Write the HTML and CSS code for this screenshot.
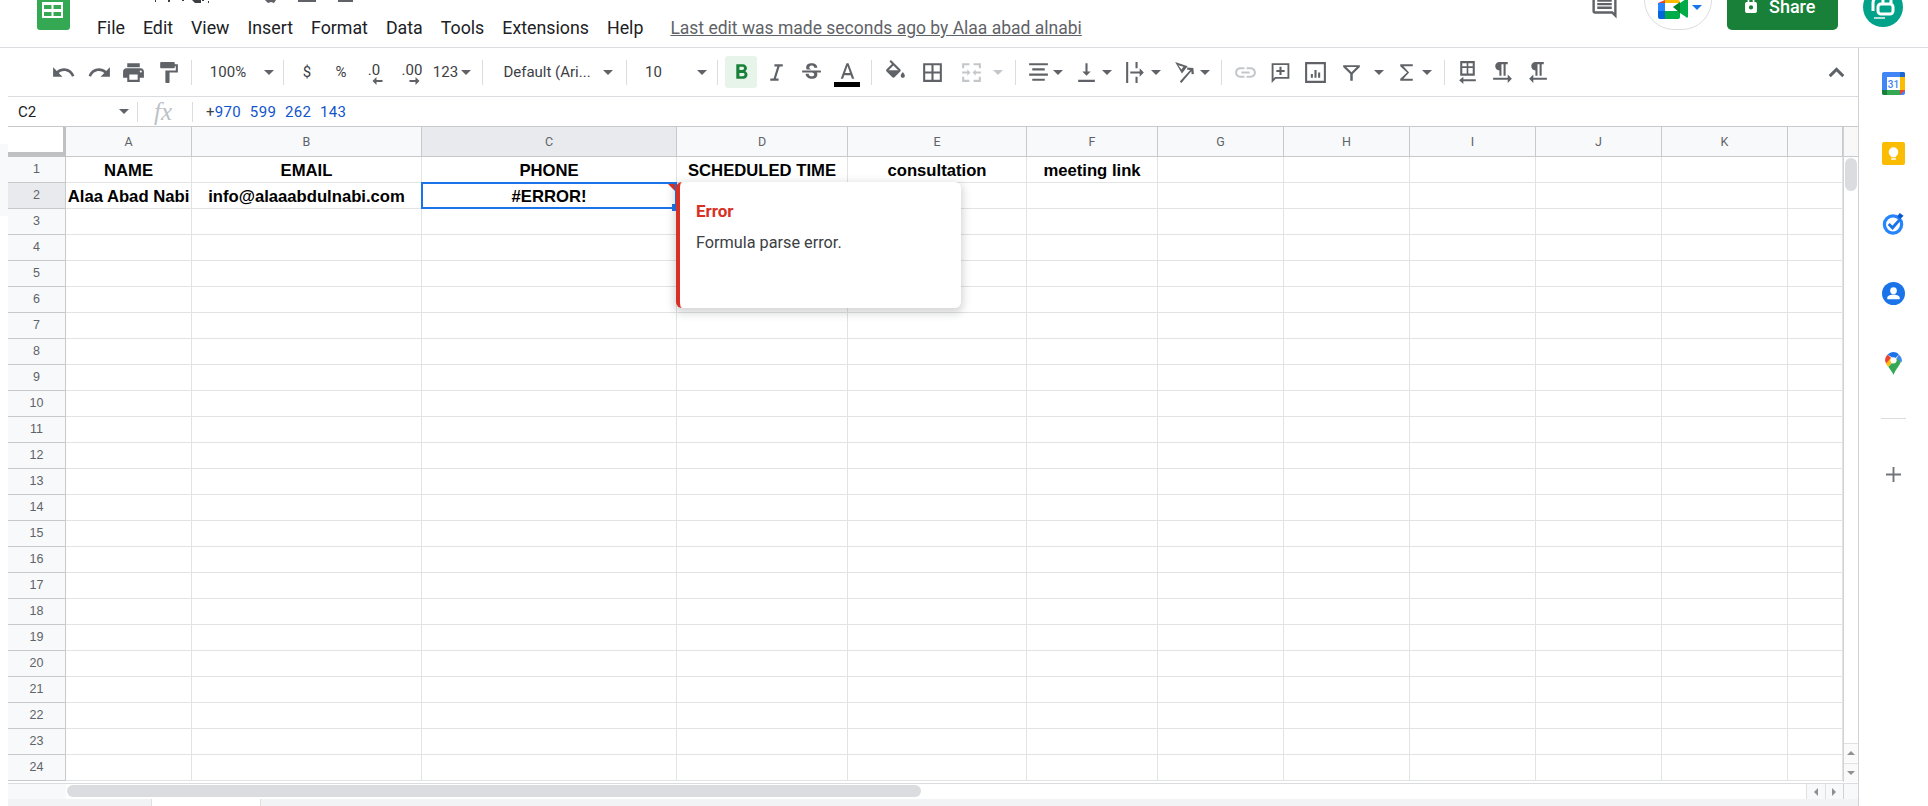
FILE: index.html
```html
<!DOCTYPE html>
<html lang="en">
<head>
<meta charset="utf-8">
<title>Sheet</title>
<link rel="stylesheet" href="styles.css">
</head>
<body>
<div class="gutter-mark"></div>
<header class="topbar">
  <svg class="logo" viewBox="0 0 33 40"><rect width="33" height="40" rx="3" fill="#34a853"/><path fill="#fff" d="M5 12h21v16H5z"/><path fill="#34a853" d="M7 15h7.500v4H7zM16.500 15H24v4h-7.500zM7 22h7.500v4H7zM16.500 22H24v4h-7.500z"/></svg>
  <svg class="title-bits" viewBox="0 0 210 3"><path fill="#3c4043" d="M1 0h1v2H1zM14 0h2v2h-2zM28 0h2v1h-2zM38 0h9v3h-6zM48 0h2v1h-2zM54 1h1v2h-1z"/><path fill="#5f6368" d="M111 0h11l-2 3-3-1-3 1zM144 0h18v2h-18zM184 0h15v2h-15z"/></svg>
  <nav class="menu"><span>File</span><span>Edit</span><span>View</span><span>Insert</span><span>Format</span><span>Data</span><span>Tools</span><span>Extensions</span><span>Help</span></nav>
  <a class="last-edit">Last edit was made seconds ago by Alaa abad alnabi</a>
  <svg class="comments" viewBox="0 0 24 24"><path fill="#5f6368" d="M21.990 4c0-1.100-.89-2-1.990-2H4c-1.100 0-2 .9-2 2v12c0 1.100.9 2 2 2h14l4 4-.01-18zM20 4v13.170L18.830 16H4V4h16zM6 12h12v2H6zm0-3h12v2H6zm0-3h12v2H6z"/></svg>
  <div class="meet">
    <svg class="meet-icon" viewBox="0 0 30 19"><path fill="#ea4335" d="M7 0v3H0z"/><path fill="#2684fc" d="M0 3h7v8H0z"/><path fill="#0066da" d="M0 11h7v8H2a2 2 0 0 1-2-2z"/><path fill="#ffba00" d="M7 0h13a2 2 0 0 1 2 2v1H7z"/><path fill="#00ac47" d="M7 11h15v6a2 2 0 0 1-2 2H7z"/><path fill="#00832d" d="M15 7l7-5v11z"/><path fill="#00ac47" d="M22 3l6-4a1 1 0 0 1 2 1v16a1 1 0 0 1-2 1l-6-4z"/></svg>
    <span class="caret blue"></span>
  </div>
  <div class="share"><svg class="lock" viewBox="0 0 14 20"><path fill="#fff" d="M12 7h-1V4.500a4 4 0 0 0-8 0V7H2a2 2 0 0 0-2 2v9a2 2 0 0 0 2 2h10a2 2 0 0 0 2-2V9a2 2 0 0 0-2-2zM5 4.500a2 2 0 0 1 4 0V7H5zM7 16a2.500 2.500 0 1 1 0-5 2.500 2.500 0 0 1 0 5z"/></svg><span>Share</span></div>
  <div class="avatar"><svg viewBox="0 0 40 40"><g fill="none" stroke="#fff" stroke-width="3"><path d="M10 24v-8a7 7 0 0 1 7-7h5"/><rect x="15" y="17" width="15" height="10" rx="3"/><path d="M20 16v-5a4 4 0 0 1 8 0v5"/></g><path fill="#b8e0d8" d="M11 30h11v2H11z"/></svg></div>
</header>
<div class="main">
  <div class="workspace">
    <div class="toolbar">
      <svg class="ic" viewBox="0 0 24 24"><path d="M12.500 8c-2.650 0-5.050.99-6.900 2.600L2 7v9h9l-3.620-3.620c1.390-1.160 3.160-1.880 5.120-1.880 3.540 0 6.550 2.310 7.600 5.500l2.370-.78C21.080 11.030 17.150 8 12.500 8z"/></svg>
      <svg class="ic" viewBox="0 0 24 24"><path d="M18.400 10.600C16.550 8.990 14.150 8 11.500 8c-4.650 0-8.580 3.030-9.960 7.220L3.900 16c1.050-3.190 4.050-5.500 7.600-5.500 1.950 0 3.730.72 5.120 1.880L13 16h9V7l-3.600 3.600z"/></svg>
      <svg class="ic" viewBox="0 0 24 24"><path d="M19 8H5c-1.660 0-3 1.340-3 3v6h4v4h12v-4h4v-6c0-1.660-1.340-3-3-3zm-3 11H8v-5h8v5zm3-7c-.55 0-1-.45-1-1s.45-1 1-1 1 .45 1 1-.45 1-1 1zm-1-9H6v4h12V3z"/></svg>
      <svg class="ic" viewBox="0 0 24 24"><path d="M18 4V3c0-.55-.45-1-1-1H5c-.55 0-1 .45-1 1v4c0 .55.45 1 1 1h12c.55 0 1-.45 1-1V6h1v4H9v11c0 .55.45 1 1 1h2c.55 0 1-.45 1-1v-9h8V4h-3z"/></svg>
      <span class="sep"></span>
      <span class="tx">100%</span><span class="caret"></span>
      <span class="sep"></span>
      <span class="tx">$</span><span class="tx">%</span>
      <span class="dec"><span>.0</span><svg viewBox="0 0 10 8"><path d="M4 0v3h6v2H4v3L0 4z"/></svg></span>
      <span class="dec"><span>.00</span><svg viewBox="0 0 10 8"><path d="M6 0v3H0v2h6v3l4-4z"/></svg></span>
      <span class="tx">123</span><span class="caret"></span>
      <span class="sep"></span>
      <span class="tx">Default (Ari...</span><span class="caret"></span>
      <span class="sep"></span>
      <span class="tx size">10</span><span class="caret"></span>
      <span class="sep"></span>
      <span class="bold-btn"><svg class="ic green" viewBox="0 0 24 24"><path d="M15.600 10.790c.97-.67 1.650-1.770 1.650-2.790 0-2.260-1.750-4-4-4H7v14h7.040c2.090 0 3.710-1.700 3.710-3.790 0-1.520-.86-2.820-2.150-3.420zM10 6.500h3c.83 0 1.500.67 1.500 1.500s-.67 1.500-1.500 1.500h-3v-3zm3.500 9H10v-3h3.500c.83 0 1.500.67 1.500 1.500s-.67 1.500-1.500 1.500z"/></svg></span>
      <svg class="ic" viewBox="0 0 24 24"><path d="M10 4v2.300h2.800L9.200 17.700H6V20h8v-2.300h-2.600l3.600-11.400H18V4z"/></svg>
      <svg class="ic" viewBox="0 0 24 24"><path d="M7.240 8.750c-.26-.48-.39-1.030-.39-1.670 0-.61.13-1.160.4-1.670.26-.5.63-.93 1.110-1.290.48-.35 1.050-.63 1.700-.83.66-.19 1.390-.29 2.180-.29.81 0 1.540.11 2.210.34.66.22 1.230.54 1.690.94.47.4.83.88 1.080 1.430.25.55.38 1.150.38 1.810h-3.010c0-.31-.05-.59-.15-.85-.09-.27-.24-.49-.44-.68-.2-.19-.45-.33-.75-.44-.3-.1-.66-.16-1.060-.16-.39 0-.74.04-1.030.13-.29.09-.53.21-.72.36-.19.16-.34.34-.44.55-.1.21-.15.43-.15.66 0 .48.25.88.74 1.210.38.25.77.48 1.410.7H7.390c-.05-.08-.11-.17-.15-.25zM21 12v-2H3v2h9.620c.18.07.4.14.55.2.37.17.66.34.87.51.21.17.35.36.43.57.07.2.11.43.11.69 0 .23-.05.45-.14.66-.09.2-.23.38-.42.53-.19.15-.42.26-.71.35-.29.08-.63.13-1.010.13-.43 0-.83-.04-1.180-.13s-.66-.23-.91-.42c-.25-.19-.45-.44-.59-.75-.14-.31-.25-.76-.25-1.210H6.400c0 .55.08 1.130.24 1.580.16.45.37.85.65 1.210.28.35.6.66.98.92.37.26.78.48 1.220.65.44.17.9.3 1.380.39.48.08.96.13 1.440.13.8 0 1.530-.09 2.180-.28s1.210-.45 1.670-.79c.46-.34.82-.77 1.070-1.270s.38-1.070.38-1.710c0-.6-.1-1.140-.31-1.610-.05-.11-.11-.23-.17-.33H21z"/></svg>
      <span class="color-a"><svg viewBox="0 0 24 18"><path d="M11 1L5.500 16h2.250l1.120-3.500h6.250l1.120 3.500h2.250L13 1h-2zm-1.380 9.500L12 3.670l2.380 6.830H9.620z"/></svg><i></i></span>
      <span class="sep"></span>
      <svg class="ic" viewBox="0 0 24 24"><path d="M16.560 8.940L7.620 0 6.210 1.410l2.380 2.380-5.150 5.150c-.59.59-.59 1.540 0 2.120l5.500 5.500c.29.29.68.44 1.060.44s.77-.15 1.060-.44l5.500-5.500c.59-.58.59-1.530 0-2.120zM5.210 10L10 5.210 14.790 10z"/><path d="M5 10h10l-5 5zM19 11.500s-2 2.170-2 3.500c0 1.100.9 2 2 2s2-.9 2-2c0-1.330-2-3.500-2-3.500z"/></svg>
      <svg class="ic" viewBox="0 0 24 24"><path d="M3 3v18h18V3H3zm8 16H5v-6h6v6zm0-8H5V5h6v6zm8 8h-6v-6h6v6zm0-8h-6V5h6v6z"/></svg>
      <svg class="ic off" viewBox="0 0 24 24"><path d="M3 3h7v2H5v3H3zM14 3h7v5h-2V5h-5zM3 16h2v3h5v2H3zM19 16h2v5h-7v-2h5zM3 11h5V9l3 3-3 3v-2H3zM21 11h-5V9l-3 3 3 3v-2h5z"/></svg>
      <span class="caret light"></span>
      <span class="sep"></span>
      <svg class="ic" viewBox="0 0 24 24"><path d="M3 3h18v2H3zM6 8h12v2H6zM3 13h18v2H3zM6 18h12v2H6z"/></svg>
      <span class="caret"></span>
      <span></span>
      <svg class="ic" viewBox="0 0 24 24"><path d="M16 11h-3V3h-2v8H8l4 4 4-4zM4 19v2h16v-2H4z"/></svg>
      <span class="caret"></span>
      <span></span>
      <svg class="ic" viewBox="0 0 24 24"><path d="M3 2h2v20H3zM12 2h2v6h-2zM12 16h2v6h-2zM7 11h9V8l4 4-4 4v-3H7z"/></svg>
      <span class="caret"></span>
      <span></span>
      <svg class="ic" viewBox="0 0 24 24"><path d="M3 2l12 4-5.500 7zm3 3l3.100 4 1.900-2.500zM7.500 20.600L17.500 9.500l-3-.2.200-2.200 5.800.5.500 5.800-2.200.2-.2-2.800L9 22z"/></svg>
      <span class="caret"></span>
      <span class="sep"></span>
      <svg class="ic off" viewBox="0 0 24 24"><path d="M3.900 12c0-1.710 1.390-3.100 3.100-3.100h4V7H7c-2.760 0-5 2.240-5 5s2.240 5 5 5h4v-1.900H7c-1.710 0-3.100-1.390-3.100-3.100zM8 13h8v-2H8v2zm9-6h-4v1.900h4c1.710 0 3.100 1.390 3.100 3.100s-1.390 3.100-3.100 3.100h-4V17h4c2.760 0 5-2.240 5-5s-2.240-5-5-5z"/></svg>
      <svg class="ic" viewBox="0 0 24 24"><path d="M3.500 3h17v15H7.500l-4 4zm1.800 1.800v12.900l1.400-1.500h12V4.800zM11 6.500h2v3h3v2h-3v3h-2v-3H8v-2h3z"/></svg>
      <svg class="ic" viewBox="0 0 24 24"><path d="M2 2h20v20H2zm2 2v16h16V4zM7.500 13.500h2V17h-2zM11 9.500h2V17h-2zM14.500 12h2v5h-2z"/></svg>
      <svg class="ic" viewBox="0 0 24 24"><path d="M4 5h16v1.800l-6.800 6.700V20h-2.400v-6.500L4 6.800zm3 1.800l5 5 5-5z"/></svg>
      <span class="caret"></span>
      <span></span>
      <svg class="ic" viewBox="0 0 24 24"><path d="M18 4H6v2l6.500 6L6 18v2h12v-2h-9l5.500-6L9 6h9z"/></svg>
      <span class="caret"></span>
      <span class="sep"></span>
      <svg class="ic" viewBox="0 0 24 24"><path d="M5 1h14v14H5zm2 2v3h4.200V3zm5.800 0v3H17V3zM7 7.600V13h4.200V7.600zm5.800 0V13H17V7.600zM8 18.500h12v2H8V23l-4-3.500L8 16z"/></svg>
      <svg class="ic" viewBox="0 0 24 24"><path d="M9 10v5h2V4h2v11h2V4h2V2H9C6.790 2 5 3.790 5 6s1.790 4 4 4zm12 8l-4-4v3H3v2h14v3l4-4z"/></svg>
      <svg class="ic" viewBox="0 0 24 24"><path d="M10 10v5h2V4h2v11h2V4h2V2h-8C7.790 2 6 3.790 6 6s1.790 4 4 4zM8 17v-3l-4 4 4 4v-3h13v-2H8z"/></svg>
      <span></span>
      <svg class="ic" viewBox="0 0 24 24"><path d="M6.500 16.500L12 11l5.500 5.500L19.500 14.500 12 7l-7.500 7.500z"/></svg>
    </div>
    <div class="formula">
      <div class="namebox"><span>C2</span><span class="caret"></span></div>
      <span class="fsep"></span>
      <span class="fx">fx</span>
      <span class="fsep"></span>
      <span class="ftext">+<b>970 599 262 143</b></span>
    </div>
    <div class="sheet">
      <div class="cells">
        <div class="row head"><div class="corner"></div><div class="ch">A</div><div class="ch">B</div><div class="ch sel">C</div><div class="ch">D</div><div class="ch">E</div><div class="ch">F</div><div class="ch">G</div><div class="ch">H</div><div class="ch">I</div><div class="ch">J</div><div class="ch">K</div><div class="ch"></div></div>
        <div class="row"><div class="rh">1</div><i>NAME</i><i>EMAIL</i><i>PHONE</i><i>SCHEDULED TIME</i><i>consultation</i><i>meeting link</i><i></i><i></i><i></i><i></i><i></i><i></i></div>
        <div class="row"><div class="rh sel">2</div><i>Alaa Abad Nabi</i><i>info@alaaabdulnabi.com</i><i>#ERROR!</i><i></i><i></i><i></i><i></i><i></i><i></i><i></i><i></i><i></i></div>
        <div class="row"><div class="rh">3</div><i></i><i></i><i></i><i></i><i></i><i></i><i></i><i></i><i></i><i></i><i></i><i></i></div>
        <div class="row"><div class="rh">4</div><i></i><i></i><i></i><i></i><i></i><i></i><i></i><i></i><i></i><i></i><i></i><i></i></div>
        <div class="row"><div class="rh">5</div><i></i><i></i><i></i><i></i><i></i><i></i><i></i><i></i><i></i><i></i><i></i><i></i></div>
        <div class="row"><div class="rh">6</div><i></i><i></i><i></i><i></i><i></i><i></i><i></i><i></i><i></i><i></i><i></i><i></i></div>
        <div class="row"><div class="rh">7</div><i></i><i></i><i></i><i></i><i></i><i></i><i></i><i></i><i></i><i></i><i></i><i></i></div>
        <div class="row"><div class="rh">8</div><i></i><i></i><i></i><i></i><i></i><i></i><i></i><i></i><i></i><i></i><i></i><i></i></div>
        <div class="row"><div class="rh">9</div><i></i><i></i><i></i><i></i><i></i><i></i><i></i><i></i><i></i><i></i><i></i><i></i></div>
        <div class="row"><div class="rh">10</div><i></i><i></i><i></i><i></i><i></i><i></i><i></i><i></i><i></i><i></i><i></i><i></i></div>
        <div class="row"><div class="rh">11</div><i></i><i></i><i></i><i></i><i></i><i></i><i></i><i></i><i></i><i></i><i></i><i></i></div>
        <div class="row"><div class="rh">12</div><i></i><i></i><i></i><i></i><i></i><i></i><i></i><i></i><i></i><i></i><i></i><i></i></div>
        <div class="row"><div class="rh">13</div><i></i><i></i><i></i><i></i><i></i><i></i><i></i><i></i><i></i><i></i><i></i><i></i></div>
        <div class="row"><div class="rh">14</div><i></i><i></i><i></i><i></i><i></i><i></i><i></i><i></i><i></i><i></i><i></i><i></i></div>
        <div class="row"><div class="rh">15</div><i></i><i></i><i></i><i></i><i></i><i></i><i></i><i></i><i></i><i></i><i></i><i></i></div>
        <div class="row"><div class="rh">16</div><i></i><i></i><i></i><i></i><i></i><i></i><i></i><i></i><i></i><i></i><i></i><i></i></div>
        <div class="row"><div class="rh">17</div><i></i><i></i><i></i><i></i><i></i><i></i><i></i><i></i><i></i><i></i><i></i><i></i></div>
        <div class="row"><div class="rh">18</div><i></i><i></i><i></i><i></i><i></i><i></i><i></i><i></i><i></i><i></i><i></i><i></i></div>
        <div class="row"><div class="rh">19</div><i></i><i></i><i></i><i></i><i></i><i></i><i></i><i></i><i></i><i></i><i></i><i></i></div>
        <div class="row"><div class="rh">20</div><i></i><i></i><i></i><i></i><i></i><i></i><i></i><i></i><i></i><i></i><i></i><i></i></div>
        <div class="row"><div class="rh">21</div><i></i><i></i><i></i><i></i><i></i><i></i><i></i><i></i><i></i><i></i><i></i><i></i></div>
        <div class="row"><div class="rh">22</div><i></i><i></i><i></i><i></i><i></i><i></i><i></i><i></i><i></i><i></i><i></i><i></i></div>
        <div class="row"><div class="rh">23</div><i></i><i></i><i></i><i></i><i></i><i></i><i></i><i></i><i></i><i></i><i></i><i></i></div>
        <div class="row"><div class="rh">24</div><i></i><i></i><i></i><i></i><i></i><i></i><i></i><i></i><i></i><i></i><i></i><i></i></div>
      </div>
      <div class="vscroll">
        <div class="vs-head"></div>
        <div class="vs-thumb"></div>
        <div class="vs-btn up"><span></span></div>
        <div class="vs-btn down"><span></span></div>
      </div>
      <div class="selection"></div>
      <div class="err-flag"></div>
      <div class="handle"></div>
      <div class="popup"><strong>Error</strong><p>Formula parse error.</p></div>
    </div>
    <div class="hscroll">
      <div class="hs-left"></div>
      <div class="hs-track"><div class="hs-thumb"></div></div>
      <div class="hs-btn"><span class="tri-l"></span></div>
      <div class="hs-btn"><span class="tri-r"></span></div>
      <div class="hs-corner"></div>
    </div>
    <div class="tabs"><div class="tab"></div></div>
  </div>
  <aside class="side">
    <div class="slot"><svg class="app" viewBox="0 0 23 23"><rect width="23" height="23" rx="2" fill="#4285f4"/><path fill="#fbbc04" d="M18 5h5v13h-5z"/><path fill="#34a853" d="M5 18h13v5H5z"/><path fill="#188038" d="M0 18h5v5H2a2 2 0 0 1-2-2z"/><path fill="#1967d2" d="M18 0h3a2 2 0 0 1 2 2v3h-5z"/><path fill="#ea4335" d="M18 18h5l-5 5z"/><rect x="5" y="5" width="13" height="13" fill="#fff"/><text x="11.500" y="15.500" class="cal-num">31</text></svg></div>
    <div class="slot"><svg class="app" viewBox="0 0 24 24"><rect width="24" height="24" rx="2" fill="#fbbc04"/><circle cx="12" cy="10.500" r="5" fill="#fff"/><path fill="#fff" d="M9.500 13h5v3h-5zM9.500 17h5v1.500h-5z"/></svg></div>
    <div class="slot"><svg class="app" viewBox="0 0 24 24"><circle cx="11.500" cy="13" r="9" fill="none" stroke="#2684fc" stroke-width="3.400"/><path d="M7 12.500l4 4 7.500-8.500" fill="none" stroke="#1a73e8" stroke-width="3"/><path d="M18.500 1l4 3-3.500 3.500-3-3z" fill="#0b57d0"/></svg></div>
    <div class="slot"><svg class="app" viewBox="0 0 24 24"><circle cx="12" cy="12" r="12" fill="#1a73e8"/><circle cx="12" cy="9" r="3.500" fill="#fff"/><path fill="#fff" d="M5.500 18v-1.500c0-2.200 4.300-3.400 6.500-3.400s6.500 1.200 6.500 3.400V18z"/></svg></div>
    <div class="slot"><svg class="app" viewBox="0 0 16 22"><path fill="#34a853" d="M8 22c-1-3-3-5-5-8l8-8 4 2c0 3-1 4-2.500 6S9 19 8 22z"/><path fill="#fbbc04" d="M1 11c.3 1.200 1 2 2 3l5-6-3-3z"/><path fill="#ea4335" d="M2.500 2.500C1 4 0 5.500 0 8c0 1 .4 2.100 1 3l4.500-5.500z"/><path fill="#1a73e8" d="M2.500 2.500C4 1 5.800 0 8 0c1.700 0 3.500.8 5 2.300L9 7z"/><path fill="#4285f4" d="M13 2.300C15 4 16 6 16 8c0 .3 0 1-.3 2L11 6z"/><circle cx="8" cy="8" r="3" fill="#fff"/></svg></div>
    <div class="side-rule"></div>
    <svg class="plus" viewBox="0 0 16 16"><path fill="#70757a" d="M7 0h2v7h7v2H9v7H7V9H0V7h7z"/></svg>
  </aside>
</div>
</body>
</html>
```

FILE: styles.css
```css
* { box-sizing: border-box; }
html, body { margin: 0; padding: 0; }
body {
  width: 1928px;
  height: 806px;
  overflow: hidden;
  background: #fff;
  font-family: Roboto, "Liberation Sans", sans-serif;
  color: #3c4043;
  position: relative;
}
.gutter-mark { position: absolute; left: 0; top: 144px; width: 8px; height: 72px; background: #f8f9fa; }

/* top bar */
.topbar {
  height: 48px;
  border-bottom: 1px solid #dadce0;
  display: flex;
  align-items: flex-end;
  overflow: hidden;
  padding-left: 37px;
}
.logo { flex: 0 0 33px; height: 40px; margin-bottom: 17px; }
.title-bits { position: absolute; left: 154px; top: 0; width: 210px; height: 3px; }
.menu { display: flex; gap: 18px; margin-left: 27px; margin-bottom: 9px; font-size: 17.800px; line-height: 20px; color: #202124; }
.last-edit { margin-left: 27px; margin-bottom: 9px; font-size: 17.500px; line-height: 20px; color: #5f6368; text-decoration: underline; }
.comments { flex: 0 0 29px; height: 29px; margin-left: auto; margin-right: 25px; margin-bottom: 26px; }
.meet {
  flex: 0 0 68px;
  height: 60px;
  margin-bottom: 17px;
  margin-right: 15px;
  border: 1px solid #dadce0;
  border-radius: 30px;
  display: flex;
  align-items: flex-end;
  padding: 0 0 10px 13px;
}
.meet-icon { width: 30px; height: 19px; flex: none; }
.caret { width: 0; height: 0; border-left: 5px solid transparent; border-right: 5px solid transparent; border-top: 5px solid #5f6368; display: block; }
.caret.blue { border-top-color: #1a73e8; margin-left: 4px; margin-bottom: 9px; }
.caret.light { border-top-color: #c4c7ca; }
.share {
  flex: 0 0 111px;
  height: 60px;
  margin-bottom: 17px;
  margin-right: 25px;
  background: #188038;
  border-radius: 5px;
  display: flex;
  align-items: flex-end;
  padding: 0 0 16px 18px;
  color: #fff;
  font-size: 18px;
  font-weight: 500;
  line-height: 14px;
}
.lock { width: 12px; height: 17px; margin-right: 12px; margin-bottom: 1px; }
.avatar { flex: 0 0 40px; height: 40px; margin-bottom: 20px; margin-right: 25px; border-radius: 50%; background: #00a389; overflow: hidden; }
.avatar svg { display: block; width: 40px; height: 40px; }

/* main */
.main { display: flex; height: 758px; }
.workspace { flex: 0 0 1851px; margin-left: 8px; border-right: 1px solid #d0d2d4; display: flex; flex-direction: column; }

/* toolbar */
.toolbar {
  height: 49px;
  border-bottom: 1px solid #dadce0;
  padding-left: 37px;
  display: grid;
  align-items: center;
  justify-items: center;
  grid-template-columns: 36px 36px 33px 36px 11px 62px 19px 10px 38px 30px 36px 40px 27px 14px 18px 112px 10px 26px 53px 20px 11px 36px 34px 36px 36px 13px 35px 39px 38px 16px 19px 26px 14px 7px 28px 14px 6px 30px 12px 8px 28px 14px 18px 30px 40px 30px 42px 13px 8px 26px 16px 19px 26px 44px 27px 1fr 24px;
  padding-right: 10px;
}
.ic { width: 25px; height: 25px; fill: #5f6368; display: block; }
.ic.off { fill: #c4c7ca; }
.ic.green { fill: #188038; }
.sep { width: 1px; height: 25px; background: #dadce0; }
.tx { font-size: 15px; line-height: 20px; color: #3c4043; white-space: nowrap; }
.tx.size { justify-self: start; padding-left: 6px; }
.dec { display: flex; flex-direction: column; align-items: center; font-size: 15px; line-height: 16px; color: #3c4043; margin-top: 2px; }
.dec svg { width: 11px; height: 8px; fill: #5f6368; margin-left: 6px; margin-top: -1px; }
.bold-btn { width: 32px; height: 32px; background: #e6f4ea; border-radius: 3px; display: flex; align-items: center; justify-content: center; }
.color-a { display: flex; flex-direction: column; align-items: center; width: 26px; margin-top: 4px; }
.color-a svg { width: 25px; height: 19px; fill: #5f6368; }
.color-a i { width: 26px; height: 5px; background: #000; margin-top: 1px; }

/* formula bar */
.formula { height: 30px; border-bottom: 1px solid #c7c9cb; display: flex; align-items: center; }
.namebox { width: 129px; padding: 0 8px 0 10px; display: flex; justify-content: space-between; align-items: center; font-size: 15px; color: #202124; }
.fsep { width: 1px; height: 20px; background: #dadce0; }
.fx { width: 54px; padding-left: 16px; font-family: "Liberation Serif", serif; font-style: italic; font-size: 25px; line-height: 28px; color: #bdc1c6; }
.ftext { margin-left: 13px; font-size: 15px; letter-spacing: .33px; word-spacing: 4.700px; color: #3c4043; }
.ftext b { font-weight: 400; color: #1155cc; }

/* sheet */
.sheet { position: relative; display: flex; height: 655px; }
.cells { flex: 0 0 1835px; }
.row {
  display: grid;
  height: 26px;
  grid-template-columns: 58px 126px 230px 255px 171px 179px 131px 126px 126px 126px 126px 126px 55px;
}
.row.head { height: 30px; }
.corner { background: #fff; border-right: 3px solid #bfc1c3; border-bottom: 5px solid #bfc1c3; }
.ch {
  background: #f8f9fa;
  border-right: 1px solid #c7c9cb;
  border-bottom: 1px solid #c7c9cb;
  font-size: 12.500px;
  color: #5f6368;
  display: flex;
  align-items: center;
  justify-content: center;
}
.ch.sel, .rh.sel { background: #e8eaed; }
.rh {
  background: #f8f9fa;
  border-right: 1px solid #c7c9cb;
  border-bottom: 1px solid #c7c9cb;
  font-family: "Liberation Sans", sans-serif;
  font-size: 12.500px;
  color: #5f6368;
  display: flex;
  align-items: center;
  justify-content: center;
  padding-bottom: 2px;
}
.row i {
  font-style: normal;
  font-family: "Liberation Sans", sans-serif;
  font-weight: 700;
  font-size: 16.670px;
  color: #000;
  border-right: 1px solid #e2e3e3;
  border-bottom: 1px solid #e2e3e3;
  padding-top: 2px;
  display: flex;
  align-items: center;
  justify-content: center;
  white-space: nowrap;
  overflow: hidden;
}
.vscroll { flex: 0 0 15px; border-left: 1px solid #d0d2d4; display: flex; flex-direction: column; position: relative; }
.vs-head { height: 30px; background: #f8f8f8; border-bottom: 1px solid #c7c9cb; }
.vs-thumb { width: 12px; height: 33px; margin: 1px 0 0 1px; background: #dadce0; border-radius: 6px; }
.vs-btn { height: 19px; background: #fafafa; border-top: 1px solid #e0e0e0; display: flex; align-items: center; justify-content: center; }
.vs-btn.up { margin-top: auto; margin-bottom: 1px; }
.vs-btn.down { margin-bottom: 0; }
.vs-btn span { width: 0; height: 0; border-left: 4px solid transparent; border-right: 4px solid transparent; }
.vs-btn.up span { border-bottom: 4px solid #909090; }
.vs-btn.down span { border-top: 4px solid #909090; }
.selection { position: absolute; left: 413px; top: 55px; width: 256px; height: 27px; border: 2px solid #1a73e8; }
.err-flag { position: absolute; left: 660px; top: 57px; width: 0; height: 0; border-top: 7px solid #d93025; border-left: 7px solid transparent; }
.handle { position: absolute; left: 664px; top: 77px; width: 7px; height: 7px; background: #1a73e8; }
.popup {
  position: absolute;
  left: 668px;
  top: 55px;
  width: 285px;
  height: 126px;
  background: #fff;
  border-left: 4px solid #d93025;
  border-radius: 6px;
  box-shadow: 0 3px 8px 2px rgba(60, 64, 67, .22);
  padding: 19px 0 0 16px;
}
.popup strong { display: block; font-size: 17px; line-height: 20px; font-weight: 700; color: #d93025; }
.popup p { margin: 12px 0 0; font-size: 16.250px; line-height: 20px; color: #3c4043; }

/* scrollbars, tabs */
.hscroll { height: 16px; margin-top: 1px; border-top: 1px solid #dadce0; display: flex; }
.hs-left { flex: 0 0 58px; background: #f8f9fa; }
.hs-track { flex: 0 0 1740px; padding: 1px 0 0 1px; }
.hs-thumb { width: 854px; height: 12px; background: #dadce0; border-radius: 6px; }
.hs-btn { flex: 0 0 18.500px; background: #f8f9fa; border-left: 1px solid #e0e0e0; display: flex; align-items: center; justify-content: center; }
.tri-l, .tri-r { width: 0; height: 0; border-top: 4px solid transparent; border-bottom: 4px solid transparent; }
.tri-l { border-right: 4px solid #909090; }
.tri-r { border-left: 4px solid #909090; }
.hs-corner { flex: 1; background: #f8f9fa; border-left: 1px solid #d0d2d4; }
.tabs { flex: 1; background: #f1f3f4; padding-left: 143px; }
.tab { width: 110px; height: 100%; background: #fff; border-left: 1px solid #e0e0e0; border-right: 1px solid #e0e0e0; }

/* side panel */
.side { flex: 1; display: flex; flex-direction: column; align-items: center; }
.slot { height: 70px; width: 100%; display: flex; align-items: center; justify-content: center; flex: none; }
.app { width: 23px; height: 23px; display: block; }
.cal-num { font-family: Roboto, sans-serif; font-size: 10px; font-weight: 500; fill: #4285f4; text-anchor: middle; }
.side-rule { width: 25px; height: 1px; background: #dadce0; margin-top: 20px; flex: none; }
.plus { width: 15px; height: 15px; margin-top: 48px; flex: none; }
```
